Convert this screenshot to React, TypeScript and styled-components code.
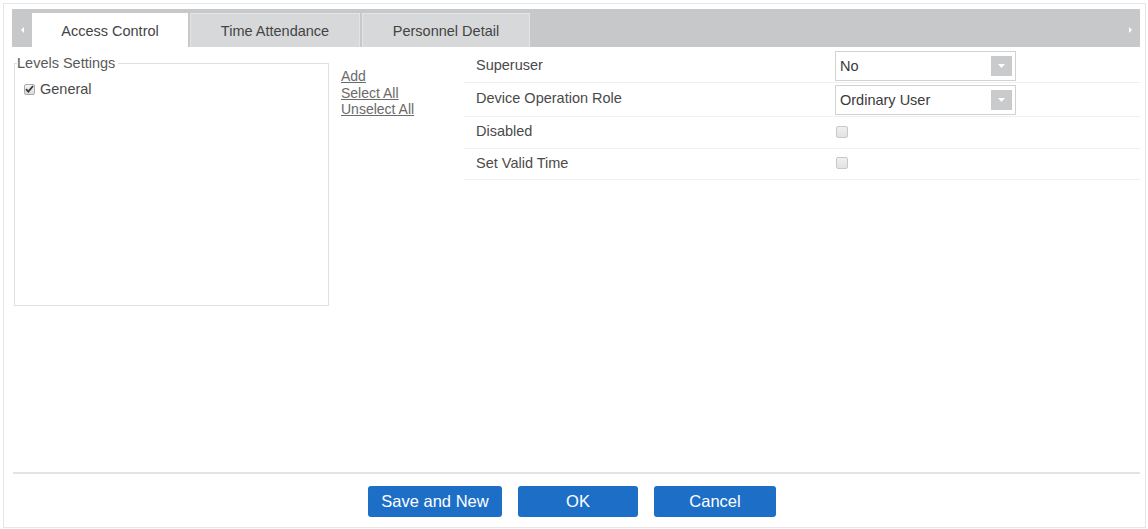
import React from "react";
import styled, { createGlobalStyle } from "styled-components";

const Global = createGlobalStyle`
  html, body { margin: 0; padding: 0; background: #fff; }
  body { font-family: "Liberation Sans", Arial, sans-serif; color: #4a4a4a; }
  * { box-sizing: border-box; }
`;

const Frame = styled.div`
  margin: 3px;
  width: 1143px;
  height: 525px;
  border: 1px solid #e6e6e6;
  padding: 5px 5px 0 8px;
  display: flex;
  flex-direction: column;
`;

const TabBar = styled.div`
  height: 38px;
  background: #c6c8ca;
  display: flex;
  align-items: flex-end;
  flex-shrink: 0;
`;

const ScrollArrow = styled.div<{ $side: "left" | "right" }>`
  width: 20px;
  height: 34px;
  display: flex;
  align-items: center;
  justify-content: center;
  margin-left: ${(p) => (p.$side === "right" ? "auto" : "0")};
  svg { display: block; }
`;

const Tab = styled.div<{ $active?: boolean; $w: number }>`
  width: ${(p) => p.$w}px;
  height: 34px;
  margin-right: 2px;
  display: flex;
  align-items: center;
  justify-content: center;
  font-size: 14.5px;
  color: #444;
  background: ${(p) => (p.$active ? "#fff" : "#d7d8d9")};
  border: 1px solid ${(p) => (p.$active ? "#fff" : "#e3e4e5")};
  border-bottom: none;
`;

const Body = styled.div`
  flex: 1;
  display: flex;
  align-items: flex-start;
  padding: 3px 0 0 2px;
`;

const LevelsBox = styled.fieldset`
  margin: 5px 0 0 0;
  width: 315px;
  height: 251px;
  border: 1px solid #e0e0e0;
  padding: 0 8px 0 2px;
  min-inline-size: 0;
`;

const Legend = styled.legend`
  padding: 0 3px 0 0;
  font-size: 14.5px;
  line-height: 16px;
  color: #5a5a5a;
`;

const LevelItem = styled.label`
  display: flex;
  align-items: center;
  gap: 5px;
  margin: 10px 0 0 7px;
  font-size: 14.5px;
  line-height: 16px;
  color: #4a4a4a;
`;

const CheckMark = styled.span`
  width: 11px;
  height: 11px;
  border: 1px solid #aaaaaa;
  border-radius: 2px;
  background: linear-gradient(#f4f4f4, #dcdcdc);
  display: flex;
  align-items: center;
  justify-content: center;
  svg { display: block; }
`;

const Links = styled.div`
  width: 123px;
  margin: 18px 0 0 12px;
  display: flex;
  flex-direction: column;
`;

const LinkText = styled.a`
  font-size: 14px;
  line-height: 16.5px;
  color: #6a6a6a;
  text-decoration: underline;
  cursor: pointer;
`;

const Grid = styled.div`
  flex: 1;
  display: flex;
  flex-direction: column;
`;

const Row = styled.div<{ $h: number }>`
  height: ${(p) => p.$h}px;
  display: flex;
  align-items: center;
  border-bottom: 1px solid #efefef;
`;

const Label = styled.div`
  width: 371px;
  padding: 0 0 3px 12px;
  font-size: 14.5px;
  color: #4a4a4a;
`;

const Select = styled.div`
  width: 181px;
  height: 30px;
  border: 1px solid #d2d2d2;
  display: flex;
  align-items: center;
  justify-content: space-between;
  padding: 0 3px 0 4px;
  font-size: 14.5px;
  color: #3a3a3a;
  background: #fff;
`;

const SelectArrow = styled.span`
  width: 21px;
  height: 20px;
  background: #c9cacb;
  display: flex;
  align-items: center;
  justify-content: center;
  svg { display: block; }
`;

const Box = styled.span`
  width: 12px;
  height: 12px;
  border: 1px solid #c9c9c9;
  border-radius: 2px;
  background: linear-gradient(#f0f0f0, #e2e2e2);
  margin: 0 0 2px 1px;
`;

const Footer = styled.div`
  border-top: 2px solid #e3e3e3;
  margin: 0 0 0 1px;
  padding: 12px 9px 10px 0;
  display: flex;
  justify-content: center;
  gap: 16px;
`;

const Button = styled.button<{ $w: number }>`
  width: ${(p) => p.$w}px;
  height: 31px;
  border: none;
  border-radius: 3px;
  background: #1d6ec7;
  color: #fff;
  font-family: "Liberation Sans", Arial, sans-serif;
  font-size: 16.5px;
  padding: 0;
  cursor: pointer;
`;

const DownTriangle = () => (
  <svg width="7" height="4" viewBox="0 0 7 4">
    <path d="M0 0h7L3.5 4z" fill="#fff" />
  </svg>
);

const SideTriangle = ({ dir }: { dir: "left" | "right" }) => (
  <svg width="3" height="6" viewBox="0 0 3 6">
    <path d={dir === "left" ? "M3 0v6L0 3z" : "M0 0v6L3 3z"} fill="#fff" />
  </svg>
);

const tabs = [
  { name: "Access Control", w: 156, active: true },
  { name: "Time Attendance", w: 170 },
  { name: "Personnel Detail", w: 168 },
];

export default function App() {
  return (
    <>
      <Global />
      <Frame>
        <TabBar>
          <ScrollArrow $side="left">
            <SideTriangle dir="left" />
          </ScrollArrow>
          {tabs.map((t) => (
            <Tab key={t.name} $w={t.w} $active={t.active}>
              {t.name}
            </Tab>
          ))}
          <ScrollArrow $side="right">
            <SideTriangle dir="right" />
          </ScrollArrow>
        </TabBar>

        <Body>
          <LevelsBox>
            <Legend>Levels Settings</Legend>
            <LevelItem>
              <CheckMark>
                <svg width="9" height="8" viewBox="0 0 9 8">
                  <path d="M1 4.2l2.3 2.4L8 1" stroke="#3a3a3a" strokeWidth="1.8" fill="none" />
                </svg>
              </CheckMark>
              General
            </LevelItem>
          </LevelsBox>

          <Links>
            <LinkText>Add</LinkText>
            <LinkText>Select All</LinkText>
            <LinkText>Unselect All</LinkText>
          </Links>

          <Grid>
            <Row $h={33}>
              <Label>Superuser</Label>
              <Select>
                No
                <SelectArrow>
                  <DownTriangle />
                </SelectArrow>
              </Select>
            </Row>
            <Row $h={34}>
              <Label>Device Operation Role</Label>
              <Select>
                Ordinary User
                <SelectArrow>
                  <DownTriangle />
                </SelectArrow>
              </Select>
            </Row>
            <Row $h={32}>
              <Label>Disabled</Label>
              <Box />
            </Row>
            <Row $h={31}>
              <Label>Set Valid Time</Label>
              <Box />
            </Row>
          </Grid>
        </Body>

        <Footer>
          <Button $w={134}>Save and New</Button>
          <Button $w={120}>OK</Button>
          <Button $w={122}>Cancel</Button>
        </Footer>
      </Frame>
    </>
  );
}
